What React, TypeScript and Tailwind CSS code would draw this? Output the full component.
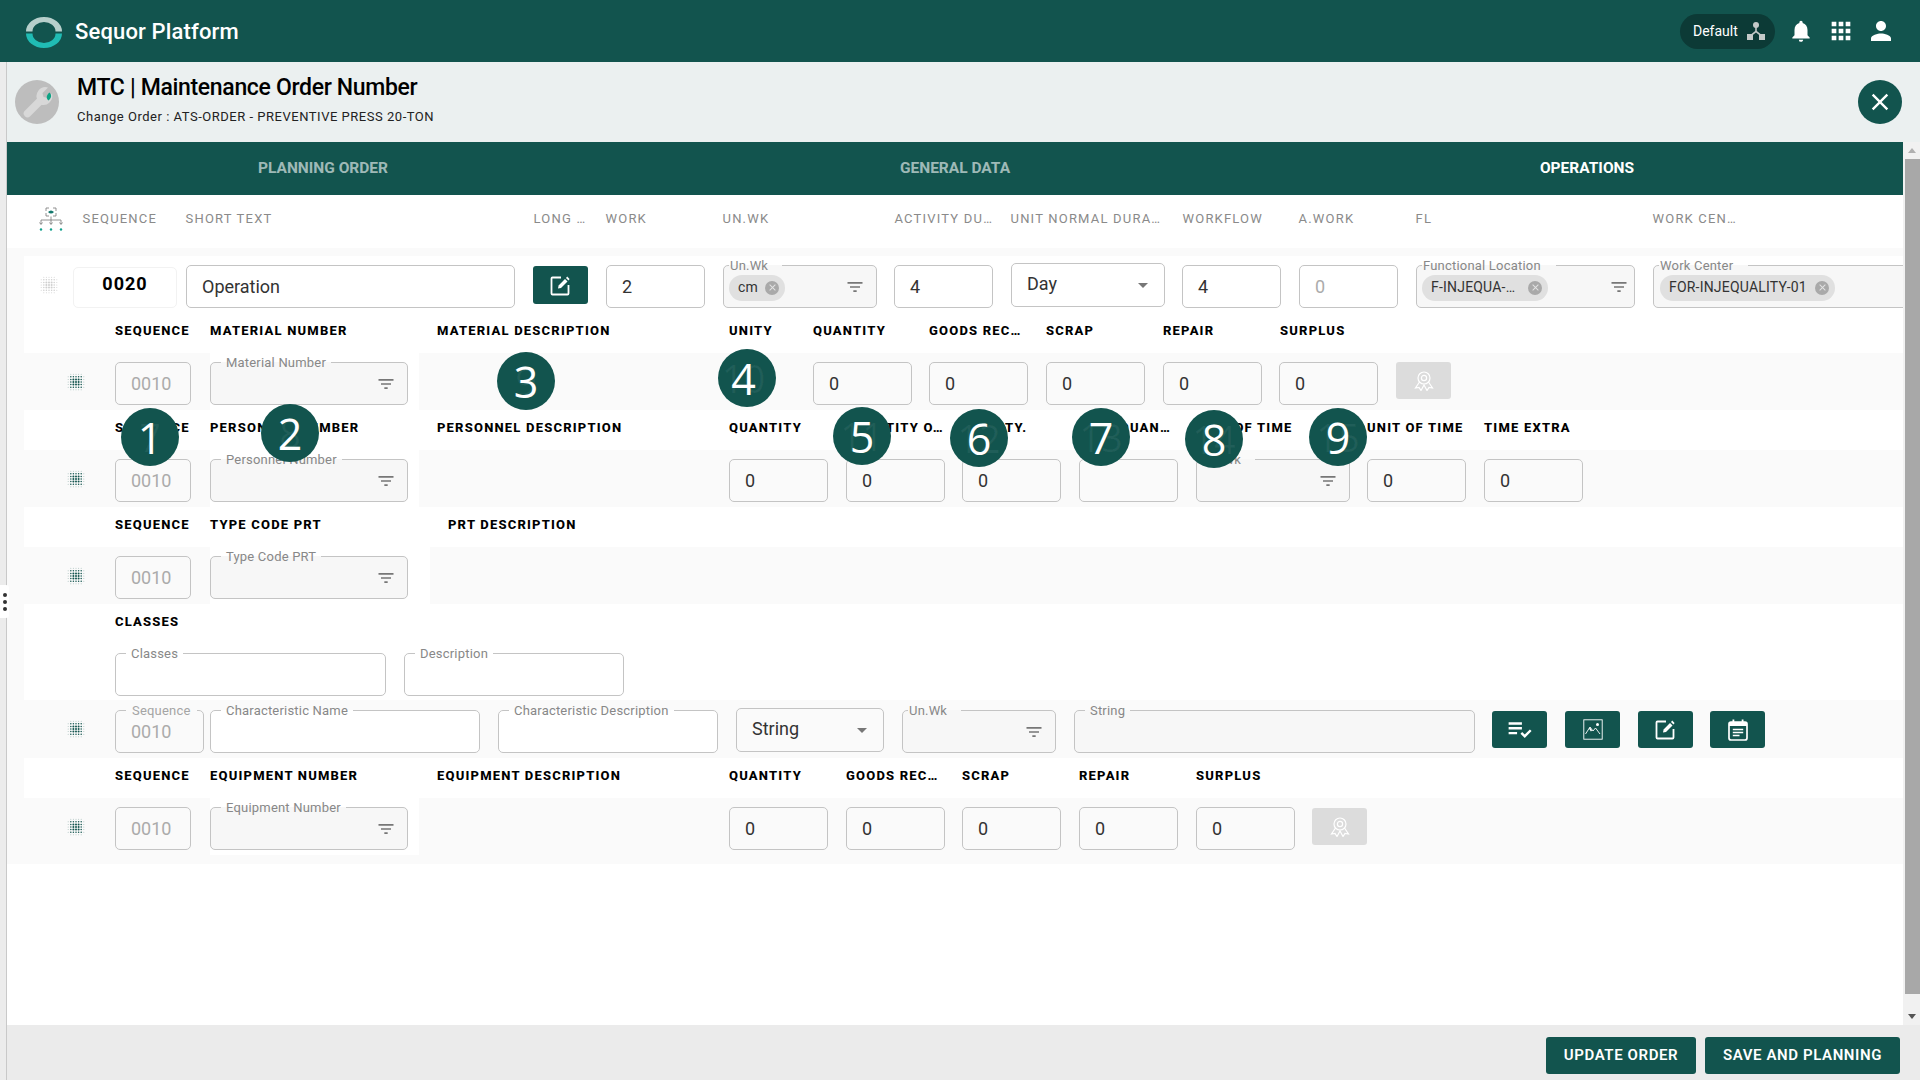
import React from 'react';
import { MdApps, MdClose, MdFilterList, MdNotifications, MdPerson, MdPlaylistAddCheck } from 'react-icons/md';

const TEAL = '#12544e';

function Logo() {
  return (
    <svg width="36" height="31" viewBox="0 0 36 31" className="mt-[3px] shrink-0">
      <path d="M0 14.5 A18 14.5 0 0 1 36 14.5 L29.5 14.5 A11.5 9.5 0 0 0 6.5 14.5 Z" fill="#b6cfcb" />
      <path d="M0 16.5 A18 14.5 0 0 0 36 16.5 L29.5 16.5 A11.5 9.5 0 0 1 6.5 16.5 Z" fill="#20bcb4" />
    </svg>
  );
}

function WrenchAvatar() {
  return (
    <svg width="44" height="44" viewBox="0 0 44 44" className="shrink-0">
      <circle cx="22" cy="22" r="22" fill="#bdbdbd" />
      <path d="M12.5 33.5 L25 21" stroke="#d8d8d8" strokeWidth="7.5" strokeLinecap="round" />
      <path d="M23 21 A9 9 0 0 1 33 7.5 L27.5 13 L28.5 17 L33 18 L37 13.5 A9 9 0 0 1 25.5 24.5 Z" fill="#d8d8d8" />
      <path d="M34.5 12.5 C37 15 36.5 18 33.5 20.5 C31 18.5 31 15.5 34.5 12.5 Z" fill="#0da384" />
    </svg>
  );
}

function HierarchyIcon() {
  return (
    <svg width="18" height="18" viewBox="0 0 18 18" fill="#c4c9c8" className="shrink-0">
      <circle cx="9" cy="3" r="3" />
      <path d="M8.2 5 h1.6 v4 l5 4 -1 1.2 L9 10.5 4.2 14.2 3.2 13 l5-4 Z" />
      <rect x="0" y="12" width="6" height="6" />
      <rect x="12" y="12" width="6" height="6" />
    </svg>
  );
}

function TreeEyeIcon() {
  return (
    <svg width="26" height="25" viewBox="0 0 26 25" fill="none" stroke="#777" strokeWidth="0.8" className="shrink-0">
      <path d="M8 4 V1 h3 M15 1 h3 v3 M18 6 v3 h-3 M11 9 H8 V6" />
      <path d="M10 5 Q13 2 16 5 Q13 8 10 5 Z" fill="#12776c" stroke="none" />
      <path d="M13 9.5 V17 M3 17 V13 H23 V17" />
      <path d="M1.5 15.5 L3 17.5 L4.5 15.5 M11.5 15.5 L13 17.5 L14.5 15.5 M21.5 15.5 L23 17.5 L24.5 15.5" />
      <circle cx="3" cy="22.5" r="1.2" fill="#12a08c" stroke="none" />
      <circle cx="13" cy="22.5" r="1.2" fill="#12a08c" stroke="none" />
      <circle cx="23" cy="22.5" r="1.2" fill="#12a08c" stroke="none" />
    </svg>
  );
}

// dotted drag handle, round outline, dots fade towards the edge
function DotGrid({ gray }: { gray?: boolean }) {
  const steps = [0, 1, 2, 3, 4, 5, 6];
  return (
    <svg width="18" height="18" viewBox="0 0 18 18" className="shrink-0">
      {steps.map((r) =>
        steps.map((c) => {
          const d = Math.hypot(r - 3, c - 3);
          if (d > 3.7) return null;
          return (
            <circle
              key={`${r}-${c}`}
              cx={1.2 + c * 2.6}
              cy={1.2 + r * 2.6}
              r={d > 2.9 ? 0.5 : d > 1.9 ? 0.75 : 1}
              fill={gray ? '#cfcfcf' : d > 2.9 ? '#a9c0bd' : TEAL}
            />
          );
        }),
      )}
    </svg>
  );
}

function EditIcon() {
  return (
    <svg width="21" height="21" viewBox="0 0 21 21" fill="none" className="shrink-0">
      <path d="M11 2.5 H2.5 a1 1 0 0 0 -1 1 V18.5 a1 1 0 0 0 1 1 H17.5 a1 1 0 0 0 1 -1 V10" stroke="#fff" strokeWidth="1.8" />
      <path d="M8 13.5 L8.6 10.6 L15 4 L17.5 6.5 L11 13 Z" fill="#fff" />
      <path d="M16 3 L17.2 1.6 L19.6 4 L18.4 5.4 Z" fill="#fff" />
    </svg>
  );
}

function ImageIcon() {
  return (
    <svg width="20" height="21" viewBox="0 0 20 21" fill="none" stroke="#fff" strokeWidth="0.9" className="shrink-0">
      <rect x="0.8" y="0.8" width="18.4" height="19.4" />
      <path d="M2.5 15 L7 8 L10 12 L12.5 9 L17 15" />
      <path d="M6.5 9 L8.5 12" strokeWidth="1.4" />
      <circle cx="14.5" cy="5.5" r="1.5" fill="#fff" stroke="none" />
    </svg>
  );
}

function CalendarIcon() {
  return (
    <svg width="20" height="22" viewBox="0 0 20 22" fill="none" className="shrink-0">
      <rect x="1" y="3" width="18" height="18" rx="2" stroke="#fff" strokeWidth="1.7" />
      <rect x="1" y="3" width="18" height="4" fill="#fff" />
      <rect x="4.5" y="0.5" width="1.8" height="4" fill="#fff" />
      <rect x="13.7" y="0.5" width="1.8" height="4" fill="#fff" />
      <path d="M4.8 10.5 H15.2 M4.8 13.5 H15.2 M4.8 16.5 H11.5" stroke="#fff" strokeWidth="1.4" />
    </svg>
  );
}

function AwardIcon() {
  return (
    <svg width="20" height="20" viewBox="0 0 20 20" fill="none" stroke="#fff" strokeWidth="1.2" className="shrink-0">
      <circle cx="10" cy="7" r="6" />
      <circle cx="10" cy="7" r="2.6" />
      <path d="M5.5 11 L1.5 17 L5 16.5 L7 19.5 L10 14 L13 19.5 L15 16.5 L18.5 17 L14.5 11" />
    </svg>
  );
}

function ColHead({ className, children }: { className: string; children: React.ReactNode }) {
  return (
    <span className={`shrink-0 whitespace-nowrap text-[13px] tracking-[1.2px] text-[#8a8a8a] ${className}`}>{children}</span>
  );
}

function Lab({ className, children }: { className: string; children: React.ReactNode }) {
  return (
    <span className={`shrink-0 whitespace-nowrap text-[13px] font-extrabold tracking-[1.2px] text-black ${className}`}>{children}</span>
  );
}

function LabelRow({ className, children }: { className?: string; children: React.ReactNode }) {
  return <div className={`ml-[17px] flex bg-white pl-[91px] leading-[36px] ${className ?? 'h-[40px]'}`}>{children}</div>;
}

function Box({ className, children, muted }: { className: string; children?: React.ReactNode; muted?: boolean }) {
  return (
    <div
      className={`flex h-[43px] shrink-0 items-center rounded-[5px] border border-[#c4c4c4] pl-[15px] text-[18px] ${
        muted ? 'text-[#ababab]' : 'text-[#333]'
      } ${className}`}
    >
      {children}
    </div>
  );
}

function Chip({ text, className }: { text: string; className: string }) {
  return (
    <span className={`flex h-[26px] shrink-0 items-center justify-between rounded-full bg-[#e0e0e0] pl-[9px] pr-[6px] text-[14px] tracking-[0.2px] text-[#333] ${className}`}>
      <span className="whitespace-nowrap">{text}</span>
      <span className="flex h-[14px] w-[14px] items-center justify-center rounded-full bg-[#a9a9a9]">
        <MdClose size={11} color="#e4e4e4" />
      </span>
    </span>
  );
}

// outlined field with the label cut into the top border
function Field({
  label,
  className,
  legendClass,
  filter,
  filterClass,
  chip,
  value,
  muted,
}: {
  label: string;
  className: string;
  legendClass?: string;
  filter?: boolean;
  filterClass?: string;
  chip?: React.ReactNode;
  value?: string;
  muted?: boolean;
}) {
  return (
    <fieldset className={`relative -mt-[7px] h-[50px] shrink-0 rounded-[5px] border border-[#c4c4c4] ${filter ? 'bg-[#f7f7f7]' : ''} ${className}`}>
      <legend className={`h-[14px] whitespace-nowrap text-[13px] leading-[16px] tracking-[0.2px] ${muted ? 'text-[#a5a5a5]' : 'text-[#888]'} ${legendClass ?? 'ml-[10px] px-[5px]'}`}>
        {label}
      </legend>
      <div className={`flex items-center ${chip ? 'h-[31px]' : 'h-[29px]'}`}>
        {chip}
        {value && <span className="pl-[15px] text-[18px] text-[#ababab]">{value}</span>}
        {filter && <MdFilterList size={20} color="#777" className={`absolute top-[5px] ${filterClass ?? 'right-[11px]'}`} />}
      </div>
    </fieldset>
  );
}

function Select({ text, className }: { text: string; className: string }) {
  return (
    <div className={`flex h-[44px] shrink-0 items-center justify-between rounded-[5px] border border-[#c4c4c4] pl-[15px] pr-[16px] text-[18px] text-[#333] ${className}`}>
      <span className="pb-[3px]">{text}</span>
      <span className="h-0 w-0 border-x-[5.5px] border-t-[5.5px] border-x-transparent border-t-[#777]" />
    </div>
  );
}

function IconBtn({ className, children, off }: { className: string; children: React.ReactNode; off?: boolean }) {
  return (
    <div className={`flex w-[55px] shrink-0 items-center justify-center rounded-[3px] ${off ? 'bg-[#dcdcdc]' : 'bg-[#12544e]'} ${className}`}>
      {children}
    </div>
  );
}

// band with handle + sequence box, the rest is passed in
function DataRow({ className, children }: { className: string; children: React.ReactNode }) {
  return (
    <div className={`flex pl-[60px] ${className}`}>
      <div className="mt-[20px] w-[17px] shrink-0">
        <DotGrid />
      </div>
      <div className="ml-[31px] flex min-w-0">{children}</div>
    </div>
  );
}

const BADGES = [
  { n: '1', ghost: '7', pos: 'left-[121px] top-[408px]' },
  { n: '2', ghost: '8', pos: 'left-[261px] top-[404px]' },
  { n: '3', ghost: '9', pos: 'left-[497px] top-[352px]' },
  { n: '4', ghost: '10', pos: 'left-[718px] top-[349px] pr-[7px]' },
  { n: '5', ghost: '11', pos: 'left-[833px] top-[407px]' },
  { n: '6', ghost: '12', pos: 'left-[950px] top-[409px]' },
  { n: '7', ghost: '13', pos: 'left-[1072px] top-[408px]' },
  { n: '8', ghost: '14', pos: 'left-[1185px] top-[410px]' },
  { n: '9', ghost: '15', pos: 'left-[1309px] top-[408px]' },
];

export default function App() {
  return (
    <div className="relative flex h-[1080px] w-[1920px] flex-col overflow-hidden bg-white font-['Roboto',sans-serif]">
      {/* Top bar */}
      <header className="flex h-[62px] shrink-0 items-center bg-[#12544e] pl-[26px] pr-[24px]">
        <Logo />
        <span className="ml-[13px] text-[22px] font-medium tracking-[0.15px] text-white">Sequor Platform</span>
        <div className="ml-auto flex h-[35px] w-[95px] items-center rounded-full bg-[#0c3a36] pl-[13px]">
          <span className="text-[14px] text-white">Default</span>
          <span className="ml-[9px]">
            <HierarchyIcon />
          </span>
        </div>
        <MdNotifications size={26} color="#fff" className="ml-[13px]" />
        <MdApps size={28} color="#fff" className="ml-[13px]" />
        <MdPerson size={30} color="#fff" className="ml-[11px]" />
      </header>

      <div className="flex min-h-0 flex-1">
        <div className="w-[7px] shrink-0 border-r border-[#c9c9c9] bg-[#ececec]" />
        <div className="flex min-w-0 flex-1 flex-col">
          {/* Order title */}
          <div className="flex h-[80px] shrink-0 items-center bg-[#ebf0f0] pl-[8px] pr-[18px]">
            <WrenchAvatar />
            <div className="ml-[18px] pb-[7px]">
              <div className="text-[23px] font-medium leading-[28px] tracking-[-0.33px] text-black">MTC | Maintenance Order Number</div>
              <div className="mt-[7px] text-[13px] leading-[15px] tracking-[0.52px] text-[#222]">
                Change Order : ATS-ORDER - PREVENTIVE PRESS 20-TON
              </div>
            </div>
            <div className="ml-auto flex h-[44px] w-[44px] items-center justify-center rounded-full bg-[#12544e]">
              <MdClose size={28} color="#fff" />
            </div>
          </div>

          <div className="flex min-h-0 flex-1">
            <div className="flex min-w-0 flex-1 flex-col">
              {/* Tabs */}
              <div className="flex h-[53px] shrink-0 bg-[#12544e] text-[15.5px] font-bold">
                <div className="flex flex-1 items-center justify-center text-white/60">PLANNING ORDER</div>
                <div className="flex flex-1 items-center justify-center text-white/60">GENERAL DATA</div>
                <div className="flex flex-1 items-center justify-center text-white">OPERATIONS</div>
              </div>

              {/* Operation columns */}
              <div className="flex h-[53px] shrink-0 items-center pb-[5px] pl-[31px]">
                <span className="w-[44.5px] shrink-0">
                  <TreeEyeIcon />
                </span>
                <ColHead className="w-[103px]">SEQUENCE</ColHead>
                <ColHead className="w-[348px]">SHORT TEXT</ColHead>
                <ColHead className="w-[72px]">LONG …</ColHead>
                <ColHead className="w-[117px]">WORK</ColHead>
                <ColHead className="w-[172px]">UN.WK</ColHead>
                <ColHead className="w-[116px]">ACTIVITY DU…</ColHead>
                <ColHead className="w-[172px]">UNIT NORMAL DURA…</ColHead>
                <ColHead className="w-[116px]">WORKFLOW</ColHead>
                <ColHead className="w-[117px]">A.WORK</ColHead>
                <ColHead className="w-[237px]">FL</ColHead>
                <ColHead className="w-[100px]">WORK CEN…</ColHead>
              </div>

              <div className="flex h-[616px] shrink-0 flex-col overflow-hidden bg-[#fafafa] pt-[8px]">
                {/* Operation row */}
                <div className="ml-[17px] flex h-[56px] shrink-0 bg-white pl-[16px] pt-[9px]">
                  <div className="mt-[11px] w-[17px] shrink-0">
                    <DotGrid gray />
                  </div>
                  <div className="ml-[16px] mt-[2px] flex h-[41px] w-[104px] shrink-0 items-center justify-center rounded-[5px] border border-[#f2f2f2] pb-[9px] text-[18px] font-bold tracking-[1px] text-black">
                    0020
                  </div>
                  <Box className="ml-[9px] w-[329px] bg-white">Operation</Box>
                  <IconBtn className="ml-[18px] mt-[1px] h-[38px]">
                    <EditIcon />
                  </IconBtn>
                  <Box className="ml-[18px] w-[99px] bg-white">2</Box>
                  <Field label="Un.Wk" filter className="ml-[18px] w-[154px]" legendClass="ml-[5px] pl-[1px] pr-[14px]" chip={<Chip text="cm" className="ml-[5px] w-[56px]" />} />
                  <Box className="ml-[17px] w-[99px] bg-white">4</Box>
                  <Select text="Day" className="-mt-[2px] ml-[18px] w-[154px] bg-white" />
                  <Box className="ml-[17px] w-[99px] bg-white">4</Box>
                  <Box muted className="ml-[18px] w-[99px] bg-white">0</Box>
                  <Field label="Functional Location" filter filterClass="right-[5px]" className="ml-[18px] w-[219px]" legendClass="ml-[5px] pl-[1px] pr-[15px]" chip={<Chip text="F-INJEQUA-…" className="ml-[5px] w-[126px]" />} />
                  <Field label="Work Center" className="ml-[18px] w-[300px] bg-[#f7f7f7]" legendClass="ml-[5px] pl-[1px] pr-[15px]" chip={<Chip text="FOR-INJEQUALITY-01" className="ml-[6px] w-[175px]" />} />
                </div>

                <LabelRow className="h-[41px] shrink-0 leading-[38px]">
                  <Lab className="w-[95px]">SEQUENCE</Lab>
                  <Lab className="w-[227px]">MATERIAL NUMBER</Lab>
                  <Lab className="w-[292px]">MATERIAL DESCRIPTION</Lab>
                  <Lab className="w-[84px]">UNITY</Lab>
                  <Lab className="w-[116px]">QUANTITY</Lab>
                  <Lab className="w-[117px]">GOODS REC…</Lab>
                  <Lab className="w-[117px]">SCRAP</Lab>
                  <Lab className="w-[117px]">REPAIR</Lab>
                  <Lab className="w-[100px]">SURPLUS</Lab>
                </LabelRow>

                {/* Material */}
                <DataRow className="h-[57px] shrink-0">
                  <Box muted className="mt-[9px] w-[76px]">0010</Box>
                  <div className="ml-[19px] h-[57px] w-[209px] shrink-0 bg-white pt-[9px]">
                    <Field label="Material Number" filter className="w-[198px]" />
                  </div>
                  <Box className="ml-[394px] mt-[9px] w-[99px]">0</Box>
                  <Box className="ml-[17px] mt-[9px] w-[99px]">0</Box>
                  <Box className="ml-[18px] mt-[9px] w-[99px]">0</Box>
                  <Box className="ml-[18px] mt-[9px] w-[99px]">0</Box>
                  <Box className="ml-[17px] mt-[9px] w-[99px]">0</Box>
                  <IconBtn off className="ml-[18px] mt-[9px] h-[37px]">
                    <AwardIcon />
                  </IconBtn>
                </DataRow>

                <LabelRow className="h-[40px] shrink-0">
                  <Lab className="w-[95px]">SEQUENCE</Lab>
                  <Lab className="w-[227px]">PERSONNEL NUMBER</Lab>
                  <Lab className="w-[292px]">PERSONNEL DESCRIPTION</Lab>
                  <Lab className="w-[117px]">QUANTITY</Lab>
                  <Lab className="w-[116px]">QUANTITY O…</Lab>
                  <Lab className="w-[117px]">QUALITY.</Lab>
                  <Lab className="w-[117px]">REAL QUAN…</Lab>
                  <Lab className="w-[171px]">UNIT OF TIME</Lab>
                  <Lab className="w-[117px]">UNIT OF TIME</Lab>
                  <Lab className="w-[100px]">TIME EXTRA</Lab>
                </LabelRow>

                {/* Personnel */}
                <DataRow className="h-[57px] shrink-0">
                  <Box muted className="mt-[9px] w-[76px]">0010</Box>
                  <div className="ml-[19px] h-[57px] w-[209px] shrink-0 bg-white pt-[9px]">
                    <Field label="Personnel Number" filter className="w-[198px]" />
                  </div>
                  <Box className="ml-[310px] mt-[9px] w-[99px]">0</Box>
                  <Box className="ml-[18px] mt-[9px] w-[99px]">0</Box>
                  <Box className="ml-[17px] mt-[9px] w-[99px]">0</Box>
                  <Box className="ml-[18px] mt-[9px] w-[99px]" />
                  <div className="ml-[18px] mt-[9px]">
                    <Field label="Un.Wk" filter className="w-[154px]" legendClass="ml-[5px] pl-[1px] pr-[14px]" />
                  </div>
                  <Box className="ml-[17px] mt-[9px] w-[99px]">0</Box>
                  <Box className="ml-[18px] mt-[9px] w-[99px]">0</Box>
                </DataRow>

                <LabelRow className="h-[40px] shrink-0">
                  <Lab className="w-[95px]">SEQUENCE</Lab>
                  <Lab className="w-[238px]">TYPE CODE PRT</Lab>
                  <Lab className="w-[200px]">PRT DESCRIPTION</Lab>
                </LabelRow>

                {/* PRT */}
                <DataRow className="h-[57px] shrink-0">
                  <Box muted className="mt-[9px] w-[76px]">0010</Box>
                  <div className="ml-[19px] h-[57px] w-[220px] shrink-0 bg-white pt-[9px]">
                    <Field label="Type Code PRT" filter className="w-[198px]" />
                  </div>
                </DataRow>

                <LabelRow className="h-[40px] shrink-0">
                  <Lab className="w-[95px]">CLASSES</Lab>
                </LabelRow>

                {/* Classes */}
                <div className="ml-[17px] flex h-[56px] shrink-0 bg-white pl-[91px] pt-[9px]">
                  <div>
                    <Field label="Classes" className="w-[271px]" />
                  </div>
                  <div className="ml-[18px]">
                    <Field label="Description" className="w-[220px]" />
                  </div>
                </div>

                {/* Characteristic */}
                <DataRow className="h-[58px] shrink-0">
                  <div className="mt-[10px]">
                    <Field label="Sequence" muted value="0010" className="w-[89px]" legendClass="ml-[10px] px-[6px]" />
                  </div>
                  <div className="ml-[6px] mt-[10px]">
                    <Field label="Characteristic Name" className="w-[270px] bg-white" />
                  </div>
                  <div className="ml-[18px] mt-[10px]">
                    <Field label="Characteristic Description" className="w-[220px] bg-white" />
                  </div>
                  <Select text="String" className="ml-[18px] mt-[8px] w-[148px]" />
                  <div className="ml-[18px] mt-[10px]">
                    <Field label="Un.Wk" filter className="w-[154px]" legendClass="ml-[5px] pl-[1px] pr-[14px]" />
                  </div>
                  <div className="ml-[18px] mt-[10px]">
                    <Field label="String" className="w-[401px] bg-[#f7f7f7]" />
                  </div>
                  <IconBtn className="ml-[17px] mt-[11px] h-[37px]">
                    <MdPlaylistAddCheck size={29} color="#fff" />
                  </IconBtn>
                  <IconBtn className="ml-[18px] mt-[11px] h-[37px]">
                    <ImageIcon />
                  </IconBtn>
                  <IconBtn className="ml-[18px] mt-[11px] h-[37px]">
                    <EditIcon />
                  </IconBtn>
                  <IconBtn className="ml-[17px] mt-[11px] h-[37px]">
                    <CalendarIcon />
                  </IconBtn>
                </DataRow>

                <LabelRow className="h-[40px] shrink-0">
                  <Lab className="w-[95px]">SEQUENCE</Lab>
                  <Lab className="w-[227px]">EQUIPMENT NUMBER</Lab>
                  <Lab className="w-[292px]">EQUIPMENT DESCRIPTION</Lab>
                  <Lab className="w-[117px]">QUANTITY</Lab>
                  <Lab className="w-[116px]">GOODS REC…</Lab>
                  <Lab className="w-[117px]">SCRAP</Lab>
                  <Lab className="w-[117px]">REPAIR</Lab>
                  <Lab className="w-[100px]">SURPLUS</Lab>
                </LabelRow>

                {/* Equipment */}
                <DataRow className="h-[66px] shrink-0">
                  <Box muted className="mt-[9px] w-[76px]">0010</Box>
                  <div className="ml-[19px] h-[57px] w-[209px] shrink-0 bg-white pt-[9px]">
                    <Field label="Equipment Number" filter className="w-[198px]" />
                  </div>
                  <Box className="ml-[310px] mt-[9px] w-[99px]">0</Box>
                  <Box className="ml-[18px] mt-[9px] w-[99px]">0</Box>
                  <Box className="ml-[17px] mt-[9px] w-[99px]">0</Box>
                  <Box className="ml-[18px] mt-[9px] w-[99px]">0</Box>
                  <Box className="ml-[18px] mt-[9px] w-[99px]">0</Box>
                  <IconBtn off className="ml-[17px] mt-[10px] h-[37px]">
                    <AwardIcon />
                  </IconBtn>
                </DataRow>
              </div>
              <div className="flex-1 bg-white" />
            </div>

            {/* Scrollbar */}
            <div className="flex w-[17px] shrink-0 flex-col items-end bg-[#f1f1f1]">
              <div className="flex h-[17px] w-full items-center justify-center">
                <span className="h-0 w-0 border-x-[4px] border-b-[5px] border-x-transparent border-b-[#b0b0b0]" />
              </div>
              <div className="h-[835px] w-[15px] bg-[#a8a8a8]" />
              <div className="flex-1" />
              <div className="flex h-[17px] w-full items-center justify-center">
                <span className="h-0 w-0 border-x-[4px] border-t-[5px] border-x-transparent border-t-[#555]" />
              </div>
            </div>
          </div>

          {/* Footer */}
          <div className="flex h-[55px] shrink-0 items-start justify-end bg-[#ebebeb] pr-[20px] pt-[12px]">
            <div className="flex h-[37px] w-[150px] items-center justify-center rounded-[3px] bg-[#12544e] text-[15px] font-semibold tracking-[0.6px] text-white">
              UPDATE ORDER
            </div>
            <div className="ml-[9px] flex h-[37px] w-[195px] items-center justify-center rounded-[3px] bg-[#12544e] text-[15px] font-semibold tracking-[0.6px] text-white">
              SAVE AND PLANNING
            </div>
          </div>
        </div>
      </div>

      {/* Side handle */}
      <div className="absolute left-0 top-[585px] flex h-[33px] w-[9px] flex-col items-center justify-center gap-[3px] rounded-r-[3px] bg-white">
        <span className="h-[4px] w-[4px] rounded-full bg-[#333]" />
        <span className="h-[4px] w-[4px] rounded-full bg-[#333]" />
        <span className="h-[4px] w-[4px] rounded-full bg-[#333]" />
      </div>

      {/* Numbered callouts laid over the form */}
      {BADGES.map((b) => (
        <div
          key={b.n}
          className={`absolute flex h-[58px] w-[58px] items-center justify-center overflow-hidden rounded-full bg-[#12544e] font-['Open_Sans',sans-serif] ${b.pos}`}
        >
          <span className="absolute text-[38px] text-white/[0.06]">{b.ghost}</span>
          <span className="relative text-[43px] font-normal leading-none text-white">{b.n}</span>
        </div>
      ))}
    </div>
  );
}
